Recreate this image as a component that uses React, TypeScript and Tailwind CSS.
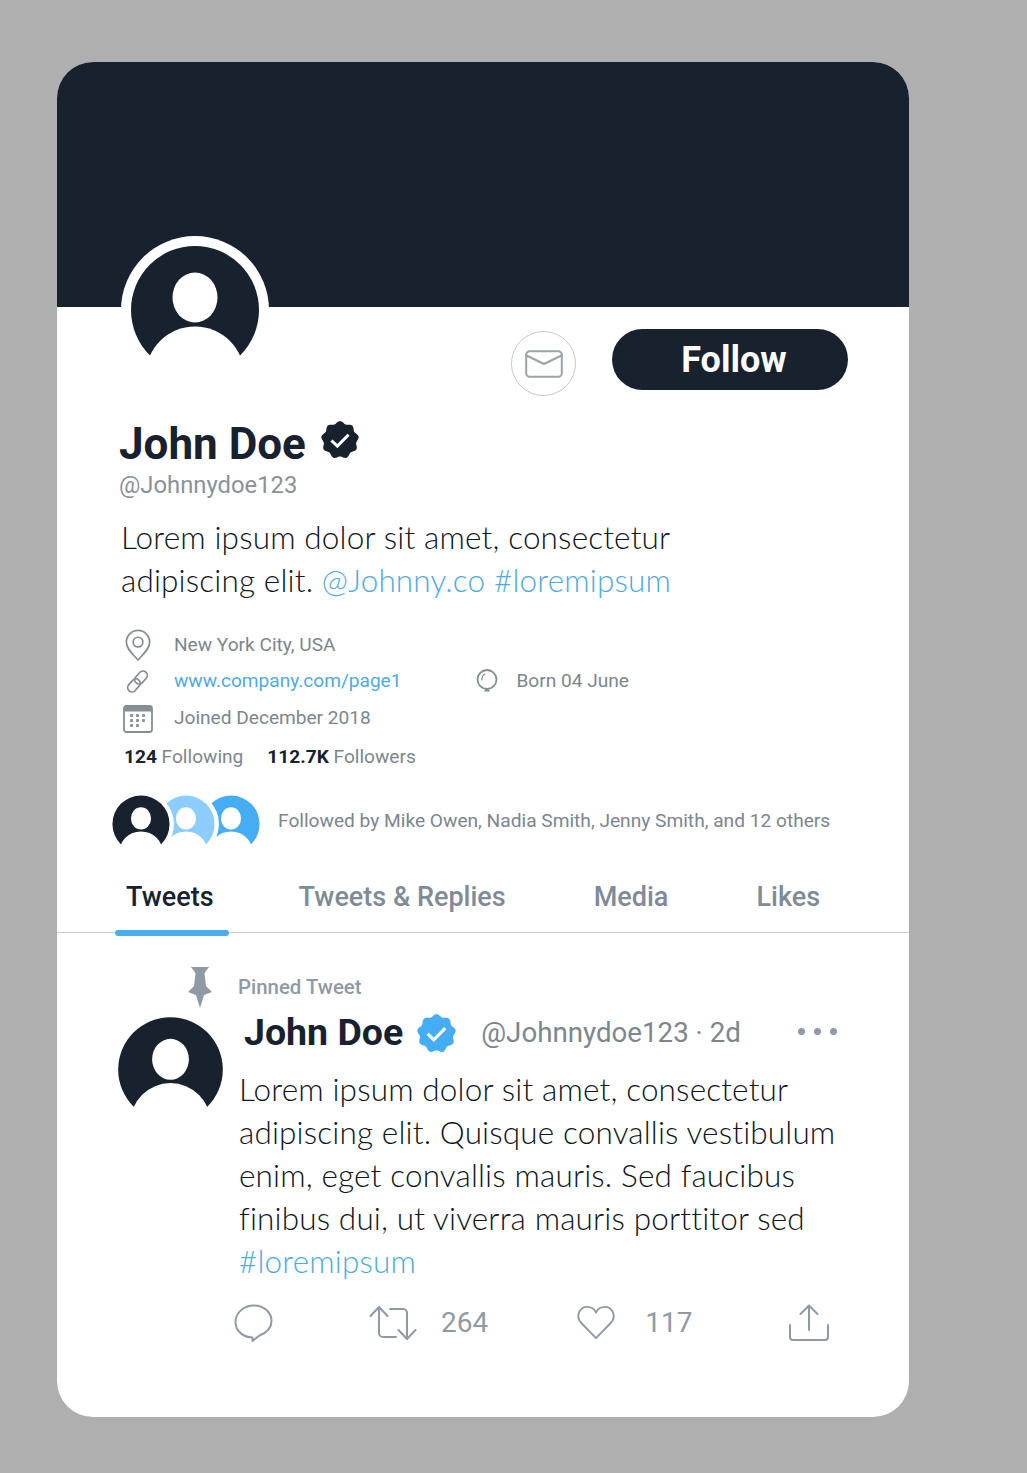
const DARK = "#18222e";

function scallop(r: number, amp: number, lobes = 9) {
  const pts: string[] = [];
  for (let i = 0; i < 180; i++) {
    const t = (i / 180) * Math.PI * 2;
    const rr = r + amp * Math.cos(lobes * t);
    pts.push(`${(20 + rr * Math.sin(t)).toFixed(2)} ${(20 - rr * Math.cos(t)).toFixed(2)}`);
  }
  return "M" + pts.join("L") + "Z";
}

function Badge({ color, className }: { color: string; className: string }) {
  return (
    <svg viewBox="0 0 40 40" className={className}>
      <path d={scallop(18.6, 1.3)} fill={color} />
      <path d="M11 20.5l6.200 6L29 14.500" fill="none" stroke="#fff" strokeWidth="3.200" />
    </svg>
  );
}

function Avatar({ color, className, ring }: { color: string; className: string; ring?: boolean }) {
  return (
    <svg viewBox="-74 -74 148 148" className={className}>
      {ring && <circle cx="0" cy="0" r="74" fill="#fff" />}
      <circle cx="0" cy="0" r="64" fill={color} />
      <ellipse cx="0" cy="-12.5" rx="22.5" ry="25" fill="#fff" />
      <circle cx="0" cy="66" r="49.4" fill="#fff" />
      <rect x="-74" y="46" width="148" height="28" fill="#fff" />
    </svg>
  );
}

function Meta({ icon, children, blue }: { icon: React.ReactNode; children: React.ReactNode; blue?: boolean }) {
  return (
    <div className="flex items-center">
      <div className="flex w-[53px] shrink-0 justify-center">{icon}</div>
      <span className={`ml-[10px] text-[19.1px] leading-none ${blue ? "text-[#4fabdf]" : "text-[#7c868e]"}`}>{children}</span>
    </div>
  );
}

const stroke = { fill: "none", stroke: "#8f9aa4", strokeWidth: 2, strokeLinecap: "round", strokeLinejoin: "round" } as const;
const metaStroke = { fill: "none", stroke: "#858e96", strokeWidth: 1.8, strokeLinecap: "round", strokeLinejoin: "round" } as const;

export default function App() {
  return (
    <div className="h-[1473px] w-full overflow-hidden bg-[#afafaf] pl-[57px] pt-[62px] font-['Roboto',sans-serif]">
      <div className="relative flex h-[1355px] w-[852px] flex-col rounded-[36px] bg-white">
        <div className="h-[245px] rounded-t-[36px] bg-[#18222e]" />
        <Avatar color={DARK} ring className="absolute left-[64px] top-[174px] h-[148px] w-[148px]" />

        <div className="flex items-start justify-end pr-[61px] pt-[22px]">
          <div className="mt-[2px] flex h-[65px] w-[65px] items-center justify-center rounded-full border border-[#c6c9cb]">
            <svg viewBox="0 0 38 28" className="h-[28px] w-[38px]">
              <rect x="1.2" y="1.2" width="35.6" height="25.6" rx="3.5" {...{ ...stroke, stroke: "#9aa3aa" }} />
              <path d="M1.5 5.5 19 14 36.5 5.5" {...{ ...stroke, stroke: "#9aa3aa" }} />
            </svg>
          </div>
          <div className="ml-[36px] flex h-[61px] w-[236px] items-center justify-center rounded-full bg-[#18222e] pl-[8px] text-[36px] font-bold text-white">Follow</div>
        </div>

        <div className="mt-[20px] flex items-start pl-[62px]">
          <div className="text-[44px] font-bold leading-[56px] text-[#18222e]">John Doe</div>
          <Badge color={DARK} className="ml-[15px] mt-[5px] h-[38px] w-[38px]" />
        </div>
        <div className="pl-[62px] text-[23.8px] leading-[26px] text-[#89929a]">@Johnnydoe123</div>

        <div className="mt-[18px] pl-[64px] font-['Lato',sans-serif] text-[31.5px] font-light leading-[43px] tracking-[0.15px] text-[#0e1620]">
          <div>Lorem ipsum dolor sit amet, consectetur</div>
          <div>adipiscing elit. <span className="text-[#4fabdf]">@Johnny.co #loremipsum</span></div>
        </div>

        <div className="mt-[25px] flex flex-col pl-[54px]">
          <div className="flex h-[36px] items-center">
            <Meta icon={
              <svg viewBox="0 0 28 34" className="h-[33px] w-[28px]">
                <path d="M14 32C9 26 2 21 2 13.5a12 12 0 0 1 24 0C26 21 19 26 14 32Z" {...metaStroke} />
                <circle cx="14" cy="13.5" r="5" {...metaStroke} />
              </svg>
            }>New York City, USA</Meta>
          </div>
          <div className="flex h-[36px] items-center">
            <Meta blue icon={
              <svg viewBox="0 0 26 28" className="h-[27px] w-[25px]">
                <g transform="rotate(-48 13 14)" {...metaStroke}>
                  <rect x="0" y="9.5" width="15" height="9" rx="4.5" />
                  <rect x="11" y="9.5" width="15" height="9" rx="4.5" />
                </g>
              </svg>
            }>www.company.com/page1</Meta>
            <div className="ml-[74px] flex items-center">
              <svg viewBox="0 0 24 26" className="h-[26px] w-[24px]">
                <circle cx="12" cy="11.5" r="9.5" {...metaStroke} />
                <path d="M7 12a6 6 0 0 1 3-6" {...metaStroke} strokeWidth="1.2" />
                <path d="M9 23.5h6L13.5 21h-3Z" fill="#858e96" />
              </svg>
              <span className="ml-[17px] text-[19.1px] leading-none text-[#7c868e]">Born 04 June</span>
            </div>
          </div>
          <div className="flex h-[38px] items-center">
            <Meta icon={
              <svg viewBox="0 0 30 28" className="mt-[1px] h-[28px] w-[30px]">
                <rect x="1" y="1" width="28" height="26" rx="2.5" {...metaStroke} />
                <path d="M1 3.5a2.5 2.5 0 0 1 2.5-2.5h23A2.5 2.5 0 0 1 29 3.5V6.5H1Z" fill="#858e96" />
                {[10.5, 15.5, 20.5].map((y) => [8.5, 14.5, 20.5].map((x) => (
                  (y === 20.5 && x > 15) ? null : <rect key={`${x}${y}`} x={x - 1.4} y={y - 1.4} width="2.8" height="2.8" fill="#858e96" />
                )))}
              </svg>
            }>Joined December 2018</Meta>
          </div>
          <div className="mt-[2px] flex h-[36px] items-center pl-[13px] text-[19.1px] leading-none text-[#7c868e]">
            <span><b className="font-bold text-[#18222e]">124</b> Following</span>
            <span className="ml-[24px]"><b className="font-bold text-[#18222e]">112.7K</b> Followers</span>
          </div>
        </div>

        <div className="mt-[15px] flex h-[62px] items-center pl-[51px]">
          <div className="relative h-[62px] w-[158px] shrink-0">
            <Avatar color="#44adf5" ring className="absolute left-[90px] top-[1px] h-[66px] w-[66px]" />
            <Avatar color="#8ccdfb" ring className="absolute left-[45px] top-[1px] h-[66px] w-[66px]" />
            <Avatar color={DARK} ring className="absolute left-0 top-[1px] h-[66px] w-[66px]" />
          </div>
          <span className="ml-[12px] text-[19.15px] leading-none text-[#7c868e]">Followed by Mike Owen, Nadia Smith, Jenny Smith, and 12 others</span>
        </div>

        <div className="relative mt-[13px] flex h-[68px] items-center border-b border-[#c9cccf] pb-[2px] text-[27px] font-medium leading-none text-[#7f8b96]">
          <span className="ml-[69px] text-[#18222e]">Tweets</span>
          <span className="ml-[85px]">Tweets &amp; Replies</span>
          <span className="ml-[88px]">Media</span>
          <span className="ml-[88px]">Likes</span>
          <div className="absolute left-[58px] top-[65px] h-[6px] w-[114px] rounded-full bg-[#4aaeea]" />
        </div>

        <div className="flex">
          <div className="relative w-[181px] shrink-0">
            <svg viewBox="0 0 24 42" className="absolute left-[131px] top-[33px] h-[42px] w-[24px]" fill="#8f9aa6">
              <path d="M3 1h18l-4.500 6 1.500 13 6 6-8 3-4 13-4-13-8-3 6-6 1.500-13Z" />
            </svg>
            <Avatar color={DARK} className="absolute left-[53px] top-[76px] h-[121px] w-[121px]" />
          </div>
          <div className="min-w-0 flex-1">
            <div className="mt-[41px] text-[20.4px] font-medium leading-[27px] text-[#8f9aa6]">Pinned Tweet</div>
            <div className="mt-[7px] flex h-[50px] items-center pl-[6px]">
              <span className="text-[37.5px] font-bold leading-none text-[#18222e]">John Doe</span>
              <Badge color="#44adf5" className="ml-[14px] h-[39px] w-[39px]" />
              <span className="ml-[25px] text-[27.7px] leading-none text-[#7c868e]">@Johnnydoe123 · 2d</span>
              <div className="mb-[4px] ml-[57px] flex gap-[9px]">
                <div className="h-[7px] w-[7px] rounded-full bg-[#8f9aa4]" />
                <div className="h-[7px] w-[7px] rounded-full bg-[#8f9aa4]" />
                <div className="h-[7px] w-[7px] rounded-full bg-[#8f9aa4]" />
              </div>
            </div>
            <div className="mt-[10px] pl-[1px] font-['Lato',sans-serif] text-[31.5px] font-light leading-[43px] tracking-[0.15px] text-[#0e1620]">
              <div>Lorem ipsum dolor sit amet, consectetur</div>
              <div>adipiscing elit. Quisque convallis vestibulum</div>
              <div>enim, eget convallis mauris. Sed faucibus</div>
              <div>finibus dui, ut viverra mauris porttitor sed</div>
              <div className="text-[#4fabdf]">#loremipsum</div>
            </div>
            <div className="mt-[17px] flex h-[46px] items-center text-[28px] leading-none text-[#8f9aa4]">
              <svg viewBox="0 0 42 40" className="ml-[-5px] h-[40px] w-[42px]">
                <path d="M21 2.500C10.500 2.500 2.500 10 2.500 19c0 9 8 15.500 17 15.500v3.500l7-5.500C33 30 38.500 25 38.500 18 38.500 9.500 31 2.500 21 2.500Z" {...stroke} />
              </svg>
              <svg viewBox="0 0 48 36" className="ml-[94px] h-[36px] w-[48px]">
                <path d="M1.500 11 10 2l8.500 9M10 3v25a4 4 0 0 0 4 4h13" {...stroke} />
                <path d="M46.500 25 38 34l-8.500-9M38 33V8a4 4 0 0 0-4-4H21" {...stroke} />
              </svg>
              <span className="ml-[24px]">264</span>
              <svg viewBox="0 0 42 38" className="ml-[87px] h-[36px] w-[42px]">
                <path d="M21 35 5 18.500C-1 11 4 2 11.500 2c4.500 0 8 2.500 9.500 6 1.500-3.500 5-6 9.500-6C38 2 43 11 37 18.500Z" {...stroke} />
              </svg>
              <span className="ml-[28px]">117</span>
              <svg viewBox="0 0 42 38" className="ml-[96px] h-[38px] w-[42px]">
                <path d="M21 26V2M12.500 10 21 1.500 29.500 10M2 21v12a3 3 0 0 0 3 3h32a3 3 0 0 0 3-3V21" {...stroke} />
              </svg>
            </div>
          </div>
        </div>
      </div>
    </div>
  );
}
